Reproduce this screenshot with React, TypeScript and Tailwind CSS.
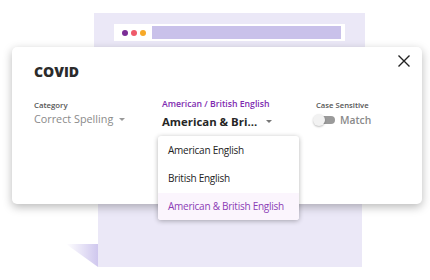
import React from "react";

function Caret({ className }: { className?: string }) {
  return (
    <svg width="6" height="3" viewBox="0 0 6 3" className={className}>
      <path d="M0 0 L6 0 L3 3 Z" fill="currentColor" />
    </svg>
  );
}

export default function App() {
  return (
    <div
      className="relative w-[430px] h-[280px] bg-white overflow-hidden"
      style={{ fontFamily: '"Open Sans", "Noto Sans", sans-serif' }}
    >
      {/* background browser panel (top part) */}
      <div className="absolute left-[94px] top-[13px] w-[271px] h-[60px] bg-[#ebe8f7] pt-[11px] pl-[20px]">
        <div className="flex items-center w-[231px] h-[17px] bg-white pl-[8px] pr-[4px] gap-[3px]">
          <span className="w-[6px] h-[6px] rounded-full bg-[#7b2d96]" />
          <span className="w-[6px] h-[6px] rounded-full bg-[#ef5a6a]" />
          <span className="w-[6px] h-[6px] rounded-full bg-[#f7a928]" />
          <span className="ml-[3px] flex-1 h-[13px] bg-[#c9c1ea]" />
        </div>
      </div>
      {/* background panel bottom part */}
      <div className="absolute left-[98px] top-[190px] w-[264px] h-[77px] bg-[#ebe8f7]" />
      {/* fold triangle */}
      <svg className="absolute left-[66px] top-[244px]" width="32" height="23" viewBox="0 0 32 23">
        <defs>
          <linearGradient id="fold" x1="0" y1="0" x2="1" y2="0">
            <stop offset="0" stopColor="#ffffff" />
            <stop offset="1" stopColor="#cfc7ee" />
          </linearGradient>
        </defs>
        <path d="M0 0 L32 0 L32 23 Z" fill="url(#fold)" />
      </svg>

      {/* modal */}
      <div className="absolute left-[12px] top-[47px] w-[410px] h-[157px] bg-white rounded-[5px] shadow-[0_3px_10px_rgba(0,0,0,0.28)] pl-[22px] pt-[15px]">
        <button className="absolute right-[11px] top-[7px] w-[14px] h-[14px] text-[#222]">
          <svg width="14" height="14" viewBox="0 0 14 14">
            <path d="M1.5 1.5 L12.5 12.5 M12.5 1.5 L1.5 12.5" stroke="currentColor" strokeWidth="1.4" />
          </svg>
        </button>
        <div className="text-[14px] leading-[20px] font-extrabold text-[#2b2b2b]">COVID</div>

        <div className="flex mt-[17px]">
          <div className="w-[128px] flex flex-col">
            <div className="text-[7.8px] leading-[12px] text-[#555] font-semibold">Category</div>
            <div className="flex items-center gap-[6px] mt-[0px] text-[10.8px] leading-[16px] text-[#8a8a8a]">
              Correct Spelling
              <Caret className="text-[#999] mt-[1px]" />
            </div>
          </div>

          <div className="relative w-[151px] flex flex-col -mt-[1px]">
            <div className="text-[8.7px] leading-[12px] text-[#7e2ab0] font-semibold">American / British English</div>
            <div className="flex items-center mt-[4px] text-[11.4px] leading-[16px] font-bold text-[#262626]">
              <span className="w-[104px]">American &amp; Bri...</span>
              <Caret className="text-[#777] -mt-[2px]" />
            </div>

            <div className="absolute left-[-4px] top-[38px] w-[141px] bg-white rounded-[3px] shadow-[0_1px_5px_rgba(0,0,0,0.3)] flex flex-col text-[10px] tracking-[-0.25px] z-10">
              <div className="h-[28px] flex items-center pl-[10px] text-[#222]">American English</div>
              <div className="h-[29px] flex items-center pl-[10px] text-[#222]">British English</div>
              <div className="h-[27px] flex items-center pl-[10px] bg-[#fbf5fd] text-[#8b3cb5] rounded-b-[3px] whitespace-nowrap">American &amp; British English</div>
            </div>
          </div>

          <div className="flex flex-col">
            <div className="pl-[3px] text-[7.7px] leading-[12px] text-[#555] font-semibold">Case Sensitive</div>
            <div className="flex items-center mt-[1px] h-[16px]">
              <div className="relative w-[22px] h-[12px] flex items-center">
                <div className="absolute left-[3px] w-[19px] h-[8px] rounded-full bg-[#9a9a9a]" />
                <div className="absolute left-0 w-[12px] h-[12px] rounded-full bg-[#f2f2f2] shadow-[0_1px_2px_rgba(0,0,0,0.25)]" />
              </div>
              <span className="ml-[5px] text-[10.3px] leading-[16px] text-[#8a8a8a] font-semibold">Match</span>
            </div>
          </div>
        </div>
      </div>
    </div>
  );
}
